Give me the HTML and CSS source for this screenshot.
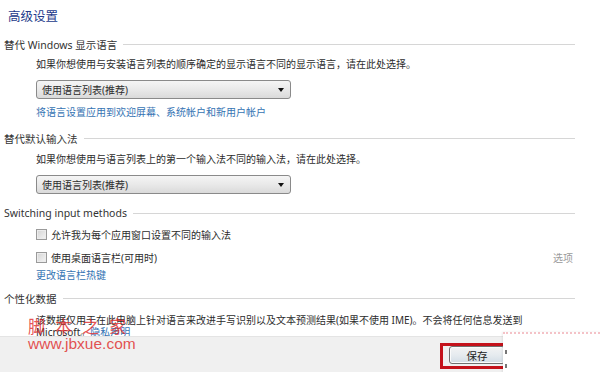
FILE: index.html
```html
<!DOCTYPE html>
<html lang="zh-CN">
<head>
    <meta charset="UTF-8">
    <meta name="viewport" content="width=device-width, initial-scale=1.0">
    <title>高级设置</title>
    <link rel="stylesheet" href="styles.css">
</head>
<body>
    <div class="window">
        <div class="content">
            <h1 class="title">高级设置</h1>

            <section class="group group-display">
                <div class="group-head">替代 Windows 显示语言</div>
                <div class="indent">
                    <p class="desc">如果你想使用与安装语言列表的顺序确定的显示语言不同的显示语言，请在此处选择。</p>
                    <div class="combo"><span>使用语言列表(推荐)</span><span class="arrow"></span></div>
                    <a class="link link-apply" href="#">将语言设置应用到欢迎屏幕、系统帐户和新用户帐户</a>
                </div>
            </section>

            <section class="group group-input">
                <div class="group-head">替代默认输入法</div>
                <div class="indent">
                    <p class="desc desc-input">如果你想使用与语言列表上的第一个输入法不同的输入法，请在此处选择。</p>
                    <div class="combo"><span>使用语言列表(推荐)</span><span class="arrow"></span></div>
                </div>
            </section>

            <section class="group group-switch">
                <div class="group-head">Switching input methods</div>
                <div class="indent">
                    <label class="check-row"><span class="check"></span>允许我为每个应用窗口设置不同的输入法</label>
                    <div class="check-row second">
                        <label class="check-label"><span class="check"></span>使用桌面语言栏(可用时)</label>
                        <span class="option">选项</span>
                    </div>
                    <a class="link link-hotkey" href="#">更改语言栏热键</a>
                </div>
            </section>

            <section class="group group-data">
                <div class="group-head">个性化数据</div>
                <div class="indent">
                    <p class="desc desc-data">该数据仅用于在此电脑上针对语言来改进手写识别以及文本预测结果(如果不使用 IME)。不会将任何信息发送到 Microsoft。<a class="link" href="#">隐私声明</a></p>
                </div>
            </section>
        </div>

        <div class="footer">
            <div class="highlight">
                <button class="btn">保存</button>
            </div>
        </div>

        <div class="watermark">
            <div class="wm-cn">脚本之家</div>
            <div class="wm-url">www.jbxue.com</div>
        </div>

        <div class="corner">
            <span class="corner-mark m1"></span>
            <span class="corner-mark m2"></span>
        </div>
    </div>
</body>
</html>
```

FILE: styles.css
```css
body {
    margin: 0;
    font-family: "Noto Sans", "Noto Sans CJK SC", sans-serif;
    font-size: 10px;
    color: #2c2c2c;
    background: #fff;
}
.window {
    position: relative;
    width: 600px;
    height: 372px;
    display: flex;
    flex-direction: column;
    overflow: hidden;
}
.content {
    height: 336px;
    overflow: hidden;
    padding: 0 25px 0 4px;
}
.title {
    margin: 0 0 0 4px;
    padding-top: 8px;
    font-size: 12.5px;
    line-height: 18px;
    font-weight: normal;
    color: #22398a;
}

/* groups */
.group {
    margin-top: 10px;
}
.group-switch {
    margin-top: 11px;
}
.group-data {
    margin-top: 7px;
}
.group-head {
    display: flex;
    align-items: center;
    gap: 6px;
    height: 16px;
    font-size: 10.5px;
    color: #333;
    white-space: nowrap;
}
.group-head::after {
    content: '';
    flex: 1;
    height: 1px;
    background: #d6d6d6;
}
.indent {
    padding-left: 32px;
}
.desc {
    margin: 4px 0 0;
    line-height: 16px;
}
.desc-input {
    margin-top: 5px;
}
.desc-data {
    margin-top: 8px;
    line-height: 12px;
    width: 510px;
}

/* combo box */
.combo {
    margin-top: 8px;
    height: 17px;
    border: 1px solid #8a8a8a;
    border-radius: 3px;
    background: linear-gradient(#f5f5f5, #e9e9e9 50%, #dadada);
    display: flex;
    align-items: center;
    justify-content: space-between;
    padding: 0 6px 0 5px;
    width: 242px;
}
.arrow {
    width: 0;
    height: 0;
    border-left: 3px solid transparent;
    border-right: 3px solid transparent;
    border-top: 4px solid #111;
}

.link {
    color: #3573b3;
    text-decoration: none;
}
.link-apply {
    display: block;
    margin-top: 5px;
    line-height: 16px;
}
.link-hotkey {
    display: block;
    margin-top: 2px;
    line-height: 16px;
}

/* checkboxes */
.check-row {
    display: flex;
    align-items: center;
    height: 16px;
    margin-top: 5px;
}
.check-row.second {
    margin-top: 7px;
    justify-content: space-between;
}
.check-label {
    display: flex;
    align-items: center;
}
.check {
    width: 9px;
    height: 9px;
    border: 1px solid #9a9a9a;
    background: linear-gradient(135deg, #d4d4d4, #f4f4f4);
    box-shadow: inset 0 0 0 1px #ececec;
    margin-right: 4px;
}
.option {
    color: #9a9a9a;
    margin-right: 2px;
}

/* footer */
.footer {
    flex: 1;
    background: #f0f0f0;
    border-top: 1px solid #e4e4e4;
    display: flex;
    justify-content: flex-end;
    align-items: flex-start;
    padding: 6px 86px 0 0;
}
.highlight {
    border: 3px solid #c4121b;
    padding: 0 6px 2px 6px;
}
.btn {
    display: block;
    width: 56px;
    height: 18px;
    padding: 0;
    font-family: "Noto Sans CJK SC", sans-serif;
    font-size: 10.5px;
    color: #222;
    border: 1px solid #707070;
    border-radius: 3px;
    background: linear-gradient(#f3f3f3, #e6ebef 50%, #d2dde6);
    box-shadow: inset 0 0 0 1px #fbfbfb;
}

/* watermarks */
.watermark {
    position: absolute;
    left: 28px;
    top: 315px;
    color: rgba(222, 38, 38, 0.8);
    pointer-events: none;
}
.wm-cn {
    font-family: "Noto Sans CJK SC", sans-serif;
    font-size: 17px;
    line-height: 21px;
    letter-spacing: 10px;
}
.wm-url {
    font-family: "Liberation Sans", sans-serif;
    font-size: 15.5px;
    line-height: 16px;
}
.corner {
    position: absolute;
    left: 503px;
    top: 332px;
    width: 97px;
    height: 40px;
    background: #fff;
    box-shadow: -1px 0 2px rgba(0, 0, 0, 0.08);
    border-top: 2px dotted rgba(230, 120, 130, 0.45);
}
.corner-mark {
    position: absolute;
    left: 2px;
    width: 2px;
    height: 4px;
    background: #777;
}
.m1 {
    top: 16px;
}
.m2 {
    top: 30px;
}
```
